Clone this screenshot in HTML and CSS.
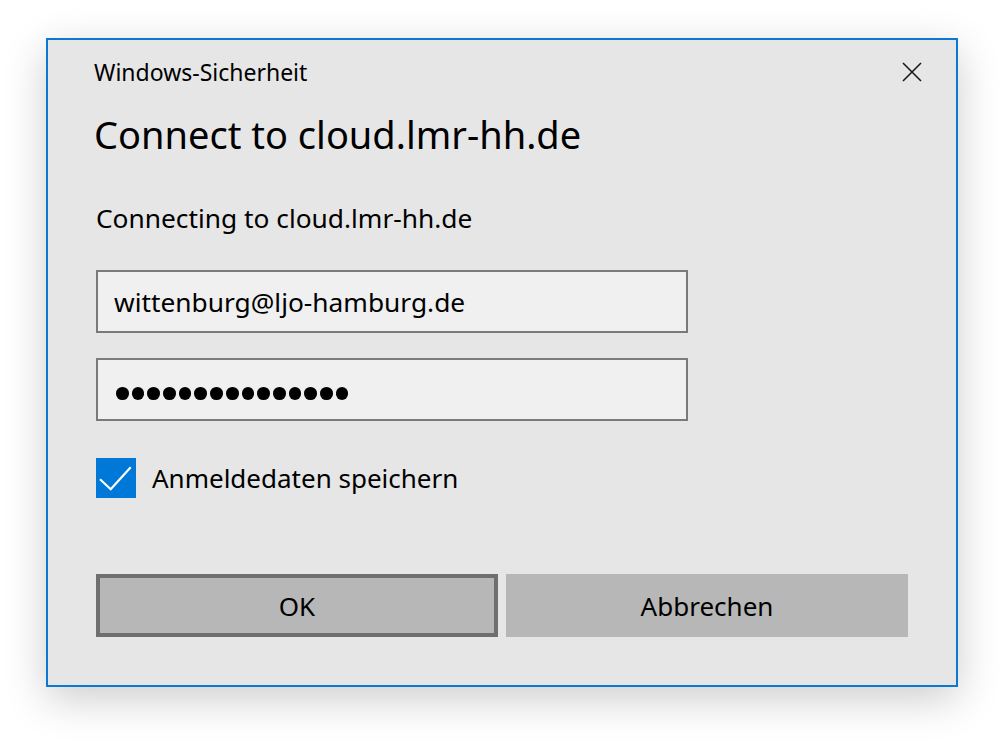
FILE: index.html
```html
<!DOCTYPE html>
<html lang="de">
<head>
<meta charset="utf-8">
<title>Windows-Sicherheit</title>
<link rel="stylesheet" href="styles.css">
</head>
<body>
<div class="stage">
  <div class="dialog">
    <div class="titlebar">
      <span class="caption">Windows-Sicherheit</span>
      <span class="close">
        <svg width="20" height="20" viewBox="0 0 20 20"><path d="M1 1 L19 19 M19 1 L1 19" stroke="#1a1a1a" stroke-width="1.6" fill="none"/></svg>
      </span>
    </div>
    <h1 class="heading">Connect to cloud.lmr-hh.de</h1>
    <p class="sub">Connecting to cloud.lmr-hh.de</p>
    <div class="field"><span class="value">wittenburg@ljo-hamburg.de</span></div>
    <div class="field pw">
      <span class="dot"></span><span class="dot"></span><span class="dot"></span><span class="dot"></span><span class="dot"></span>
      <span class="dot"></span><span class="dot"></span><span class="dot"></span><span class="dot"></span><span class="dot"></span>
      <span class="dot"></span><span class="dot"></span><span class="dot"></span><span class="dot"></span><span class="dot"></span>
    </div>
    <label class="check">
      <span class="box"><svg width="40" height="40" viewBox="0 0 40 40"><path d="M4 21.3 L14.7 31.3 L34.7 9.3" stroke="#fff" stroke-width="2.2" fill="none"/></svg></span>
      <span class="check-label">Anmeldedaten speichern</span>
    </label>
    <div class="buttons">
      <button class="btn btn-default">OK</button>
      <button class="btn">Abbrechen</button>
    </div>
  </div>
</div>
</body>
</html>
```
FILE: styles.css
```css
html, body {
  margin: 0;
  padding: 0;
  background: #ffffff;
}
body {
  font-family: "Noto Sans", "Open Sans", sans-serif;
  color: #000;
}
.stage {
  padding: 38px 0 0 46px;
  min-height: 742px;
  box-sizing: border-box;
}
.dialog {
  box-sizing: border-box;
  width: 912px;
  height: 649px;
  border: 2px solid #0b78d4;
  background: #e6e6e6;
  box-shadow: 0 12px 40px rgba(0, 0, 0, 0.2);
  padding: 0 48px;
  display: flex;
  flex-direction: column;
}
.titlebar {
  height: 64px;
  display: flex;
  align-items: center;
  justify-content: space-between;
}
.caption {
  font-size: 23px;
  margin-left: -2px;
}
.close {
  display: flex;
  margin-right: -14px;
}
.heading {
  margin: 0;
  font-weight: normal;
  font-size: 38px;
  line-height: 60px;
  height: 60px;
  margin-left: -2px;
}
.sub {
  margin: 36px 0 0;
  font-size: 26.3px;
  line-height: 36px;
  height: 36px;
}
.field {
  margin-top: 34px;
  width: 592px;
  height: 63px;
  box-sizing: border-box;
  border: 2px solid #7a7a7a;
  background: #f0f0f0;
  display: flex;
  align-items: center;
  padding-left: 16px;
  font-size: 26.3px;
}
.field.pw {
  margin-top: 25px;
  gap: 3px;
  padding-left: 18px;
  padding-top: 8px;
}
.dot {
  width: 12.7px;
  height: 12.7px;
  border-radius: 50%;
  background: #000;
}
.check {
  margin-top: 37px;
  display: flex;
  align-items: center;
  gap: 16px;
  height: 40px;
}
.box {
  width: 40px;
  height: 40px;
  background: #0078d7;
  display: flex;
}
.check-label {
  font-size: 26px;
}
.buttons {
  margin-top: 76px;
  display: flex;
  gap: 8px;
}
.btn {
  width: 402px;
  height: 63px;
  box-sizing: border-box;
  border: none;
  background: #b7b7b7;
  font-family: inherit;
  font-size: 26px;
  color: #000;
  padding: 0;
}
.btn-default {
  border: 4px solid #6f6f6f;
}
```
